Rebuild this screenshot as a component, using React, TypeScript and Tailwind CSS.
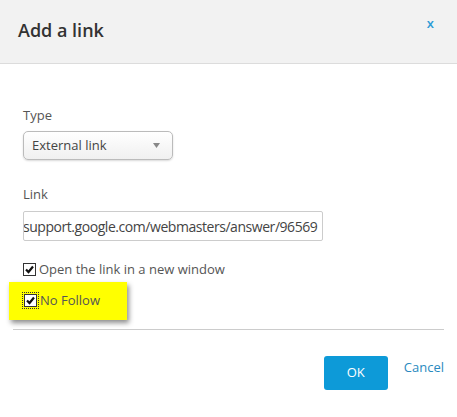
const CheckBox = ({ dotted }: { dotted?: boolean }) => (
  <span
    className={`relative inline-flex w-[13px] h-[13px] items-center justify-center bg-white border border-[#333] ${
      dotted ? "outline outline-1 outline-dotted outline-[#333] outline-offset-1" : ""
    }`}
  >
    <svg width="11" height="11" viewBox="0 0 11 11">
      <path d="M2 5.5 L4.5 8 L9 2.5" fill="none" stroke="#111" strokeWidth="2.2" />
    </svg>
  </span>
);

const App = () => {
  return (
    <div className="w-[457px] h-[417px] bg-white font-['Open_Sans',sans-serif] text-[#555] overflow-hidden">
      {/* header */}
      <div className="h-[64px] bg-[#f2f2f2] border-b border-[#dcdcdc] flex items-start justify-between pl-[18px] pr-[23px]">
        <div className="mt-[17px] text-[18px] font-semibold text-[#333]">Add a link</div>
        <div className="mt-[14px] text-[13px] font-semibold text-[#2d9bd6]">x</div>
      </div>

      <div className="px-[23px] pt-[42px]">
        <div className="text-[13px] leading-[18px] mb-[7px]">Type</div>
        <div className="w-[150px] h-[29px] rounded-[5px] border border-[#bbb] bg-gradient-to-b from-white to-[#f0f0f0] shadow-[0_1px_2px_rgba(0,0,0,0.15)] flex items-center justify-between pl-[8px] pr-[12px]">
          <span className="text-[13px] text-[#444]">External link</span>
          <svg width="7" height="5" viewBox="0 0 7 5">
            <path d="M0 0 L7 0 L3.5 5 Z" fill="#888" />
          </svg>
        </div>

        <div className="text-[13px] leading-[18px] mt-[25px] mb-[8px]">Link</div>
        <div className="w-[300px] h-[30px] border border-[#ccc] rounded-[2px] flex items-center overflow-hidden pl-[1px]">
          <span className="text-[14px] whitespace-nowrap text-[#444] tracking-[-0.45px] -ml-[2px]">support.google.com/webmasters/answer/96569</span>
        </div>

        <div className="flex items-center gap-[3px] mt-[19px] text-[13px]">
          <CheckBox />
          <span>Open the link in a new window</span>
        </div>
      </div>

      <div className="ml-[9px] mt-[2px] w-[118px] h-[38px] bg-[#ffff00] shadow-[2px_3px_5px_rgba(0,0,0,0.45)] flex items-center gap-[3px] pl-[15px] text-[13px]">
        <CheckBox dotted />
        <span>No Follow</span>
      </div>

      <div className="mx-[13px] mt-[9px] border-t border-[#ccc]" />

      <div className="flex justify-end items-start pr-[13px] mt-[26px] gap-[16px]">
        <button className="w-[64px] h-[34px] rounded-[3px] bg-[#0d9ad8] text-white text-[13px]">OK</button>
        <span className="text-[13px] text-[#2a8ac0] mt-[2px]">Cancel</span>
      </div>
    </div>
  );
};

export default App;
